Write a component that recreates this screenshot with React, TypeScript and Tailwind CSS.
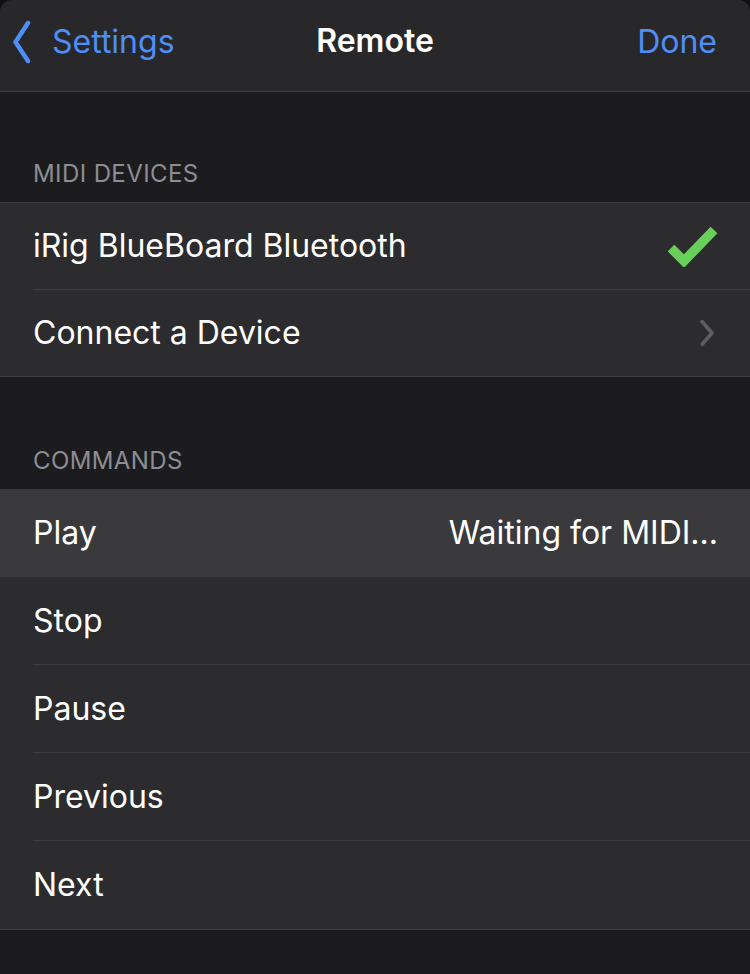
import { ReactNode } from "react";

function Row({ label, right, active, last, tall }: { label: string; right?: ReactNode; active?: boolean; last?: boolean; tall?: boolean }) {
    return (
        <div className={`pl-[33px] ${active ? "bg-[#3a3a3c]" : "bg-[#2c2c2e]"}`}>
            <div className={`${tall ? "h-[88px]" : "h-[86.5px]"} flex items-center justify-between pr-[32px] ${last || active ? "" : "border-b border-[#3d3d40]"}`}>
                <span className="text-white text-[32px]">{label}</span>
                {right}
            </div>
        </div>
    );
}

function Header({ title, top }: { title: string; top: string }) {
    return <div className={`pl-[33px] ${top} pb-[14px] leading-[28px] text-[24px] text-[#8d8d93] uppercase tracking-[0.4px]`}>{title}</div>;
}

export default function App() {
    const font = { fontFamily: "Inter, 'Noto Sans', sans-serif" };
    return (
        <div className="w-[750px] h-[974px] bg-[#111112] overflow-hidden" style={font}>
            <div className="h-full bg-[#1c1c1e] rounded-tl-[12px] rounded-tr-[12px] overflow-hidden">
                <div className="relative h-[92px] bg-[#28282a] border-b border-[#3d3d40] flex items-center justify-between pl-[12px] pr-[17px] pb-[8px]">
                    <div className="flex items-center gap-[21px] text-[#4f8ef7] text-[32px]">
                        <svg width="19" height="44" viewBox="0 0 19 44" fill="none">
                            <path d="M16 3 L3.5 22 L16 41" stroke="#4f8ef7" strokeWidth="4.5" strokeLinecap="round" strokeLinejoin="round" />
                        </svg>
                        <span>Settings</span>
                    </div>
                    <div className="absolute inset-0 flex items-center justify-center pb-[9px] pointer-events-none">
                        <span className="text-white text-[32px] font-semibold">Remote</span>
                    </div>
                    <span className="text-[#4f8ef7] text-[32px] pr-[16px]">Done</span>
                </div>

                <Header title="MIDI Devices" top="pt-[68px]" />
                <div className="border-y border-[#3d3d40]">
                    <Row
                        label="iRig BlueBoard Bluetooth"
                        right={
                            <svg width="50" height="42" viewBox="0 0 50 42">
                                <path d="M3 23 L16 36 L46 5" stroke="#68cf58" strokeWidth="9.5" fill="none" />
                            </svg>
                        }
                    />
                    <Row
                        label="Connect a Device"
                        last
                        right={
                            <svg width="16" height="28" viewBox="0 0 16 28" className="mr-[3px]">
                                <path d="M3 2.5 L13 14 L3 25.5" stroke="#5d5d62" strokeWidth="3.5" fill="none" strokeLinecap="round" strokeLinejoin="round" />
                            </svg>
                        }
                    />
                </div>

                <Header title="Commands" top="pt-[70px]" />
                <div className="border-b border-[#3d3d40]">
                    <Row label="Play" tall active right={<span className="text-white text-[32px]">Waiting for MIDI...</span>} />
                    <Row label="Stop" tall />
                    <Row label="Pause" tall />
                    <Row label="Previous" tall />
                    <Row label="Next" tall last />
                </div>
            </div>
        </div>
    );
}
